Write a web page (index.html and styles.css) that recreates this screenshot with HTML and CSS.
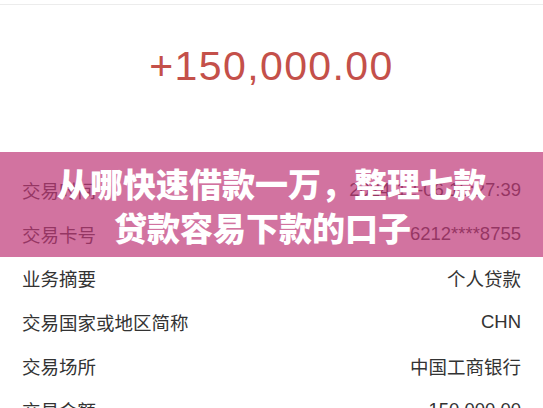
FILE: index.html
```html
<!DOCTYPE html>
<html lang="zh-CN">
<head>
  <meta charset="UTF-8">
  <title>交易详情</title>
  <link rel="stylesheet" href="styles.css">
</head>
<body>
  <div class="page">
    <div class="topbar"></div>

    <div class="amount">+150,000.00</div>

    <ul class="detail">
      <li><span>交易时间</span><span>2024-12-06 15:27:39</span></li>
      <li><span>交易卡号</span><span>6212****8755</span></li>
      <li><span>业务摘要</span><span>个人贷款</span></li>
      <li><span>交易国家或地区简称</span><span>CHN</span></li>
      <li><span>交易场所</span><span>中国工商银行</span></li>
      <li><span>交易金额</span><span>150,000.00</span></li>
    </ul>

    <!-- 标题横幅 -->
    <div class="banner">
      <h1>从哪快速借款一万，整理七款<br><span class="sub">贷款容易下款的口子</span></h1>
    </div>
  </div>
</body>
</html>
```

FILE: styles.css
```css
body {
  margin: 0;
  background-color: #ffffff;
  font-family: "Liberation Sans", "Noto Sans CJK SC", sans-serif;
  color: #333;
}
.page {
  position: relative;
  height: 408px;
  overflow: hidden;
}
.topbar {
  height: 4px;
  border-bottom: 1px solid #ececec;
}
.amount {
  padding: 37px 0 78px;
  line-height: 48px;
  text-align: center;
  font-size: 41px;
  letter-spacing: 1.4px;
  color: #c4504a;
}
.detail {
  list-style-type: none;
  margin: 0;
  padding: 0;
}
.detail li {
  display: flex;
  justify-content: space-between;
  align-items: center;
  height: 44px;
  padding: 0 22px;
  font-size: 18.5px;
  color: #333;
}

/* 标题横幅 */
.banner {
  position: absolute;
  top: 152px;
  left: 0;
  right: 0;
  height: 105px;
  display: flex;
  align-items: center;
  justify-content: center;
  background-color: rgba(191, 55, 120, 0.7);
}
.banner h1 {
  margin: 0;
  text-align: center;
  font-family: "Noto Sans CJK SC", sans-serif;
  font-weight: 900;
  font-size: 33px;
  line-height: 44px;
  color: #ffffff;
}
.banner .sub {
  padding-right: 18px;
}
```
